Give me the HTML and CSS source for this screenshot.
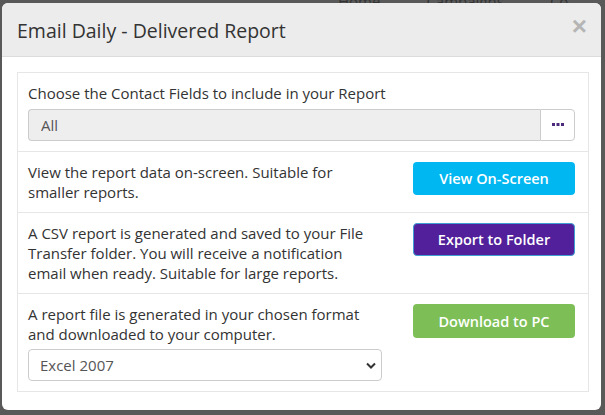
FILE: index.html
```html
<!DOCTYPE html>
<html lang="en">
<head>
  <meta charset="UTF-8">
  <meta name="viewport" content="width=device-width, initial-scale=1.0">
  <title>Email Daily - Delivered Report</title>
  <link rel="stylesheet" href="styles.css">
</head>
<body>
  <nav class="backdrop-nav">
    <span>Home</span>
    <span>Campaigns</span>
    <span>Co</span>
  </nav>
  <div class="modal">
    <header class="modal-header">
      <h4 class="modal-title">Email Daily - Delivered Report</h4>
      <button class="close" type="button">&times;</button>
    </header>
    <div class="modal-body">
      <div class="report-box">
        <div class="report-row">
          <label class="field-label" for="fields">Choose the Contact Fields to include in your Report</label>
          <div class="input-group">
            <input type="text" id="fields" class="form-control" value="All" readonly>
            <button class="btn-dots" type="button">
              <svg width="12" height="4" viewBox="0 0 12 4"><rect x="0" y="0" width="3" height="3" fill="#4b2a7e"/><rect x="4.5" y="0" width="3" height="3" fill="#4b2a7e"/><rect x="9" y="0" width="3" height="3" fill="#4b2a7e"/></svg>
            </button>
          </div>
        </div>
        <div class="report-row split">
          <p class="desc">View the report data on-screen. Suitable for smaller reports.</p>
          <button class="btn btn-info" type="button">View On-Screen</button>
        </div>
        <div class="report-row split">
          <p class="desc">A CSV report is generated and saved to your File Transfer folder. You will receive a notification email when ready. Suitable for large reports.</p>
          <button class="btn btn-purple" type="button">Export to Folder</button>
        </div>
        <div class="report-row split">
          <div>
            <p class="desc">A report file is generated in your chosen format and downloaded to your computer.</p>
            <div class="select-wrap">
              <select class="form-select">
                <option>Excel 2007</option>
                <option>CSV</option>
              </select>
              <svg class="chevron" width="10" height="7" viewBox="0 0 10 7"><path d="M1 1.5 L5 5.5 L9 1.5" fill="none" stroke="#333" stroke-width="2"/></svg>
            </div>
          </div>
          <button class="btn btn-success" type="button">Download to PC</button>
        </div>
      </div>
    </div>
  </div>
</body>
</html>
```

FILE: styles.css
```css
body {
  margin: 0;
  padding: 0;
  background-color: #595959;
  font-family: 'Open Sans', 'Liberation Sans', sans-serif;
  color: #333;
  overflow: hidden;
}
.backdrop-nav {
  position: absolute;
  top: -9px;
  left: 338px;
  display: flex;
  gap: 46px;
  font-size: 15px;
  color: #333;
}
.modal {
  position: relative;
  margin: 3px 4px 0 2px;
  background: #fff;
  border-radius: 6px;
  overflow: hidden;
  height: 407px;
}
.modal-header {
  display: flex;
  align-items: center;
  justify-content: space-between;
  background: #ececec;
  border-bottom: 1px solid #dcdcdc;
  height: 53px;
  padding: 0 14px 0 15px;
}
.modal-title {
  margin: 0;
  font-size: 19.5px;
  font-weight: 400;
  color: #333;
  padding-top: 2px;
}
.close {
  border: none;
  background: none;
  color: #b5b5b5;
  font-size: 26px;
  font-weight: 700;
  line-height: 1;
  padding: 0;
  margin-top: -8px;
  cursor: pointer;
}
.modal-body {
  padding: 15px 12px 15px 15px;
}
.report-box {
  border: 1px solid #e6e6e6;
}
.report-row {
  padding: 10px 13px 10px 10px;
  border-top: 1px solid #e6e6e6;
  font-size: 15px;
  line-height: 20px;
}
.report-row:first-child {
  border-top: none;
}
.report-row.split {
  display: grid;
  grid-template-columns: 354px 1fr;
  column-gap: 31px;
  align-items: start;
}
.field-label {
  display: block;
  margin-bottom: 6px;
}
.input-group {
  display: flex;
  height: 32px;
}
.form-control {
  flex: 1;
  margin: 0;
  border: 1px solid #ccc;
  border-right: none;
  border-radius: 4px 0 0 4px;
  background: #eee;
  color: #555;
  font-family: inherit;
  font-size: 15px;
  padding: 0 12px;
}
.btn-dots {
  width: 35px;
  border: 1px solid #ccc;
  border-radius: 0 4px 4px 0;
  background: #fff;
  display: flex;
  align-items: center;
  justify-content: center;
  padding: 0;
}
.desc {
  margin: 0;
}
.btn {
  height: 33px;
  border: 1px solid transparent;
  border-radius: 4px;
  color: #fff;
  font-family: inherit;
  font-size: 14.5px;
  font-weight: 600;
  cursor: pointer;
}
.btn-info {
  background: #00b7f1;
}
.btn-purple {
  background: #51209a;
  border-color: #3f9fd3;
}
.btn-success {
  background: #7dbf56;
  height: 34px;
}
.select-wrap {
  position: relative;
  margin-top: 5px;
}
.form-select {
  width: 100%;
  height: 32px;
  border: 1px solid #ccc;
  border-radius: 4px;
  background: #fff;
  color: #555;
  font-family: inherit;
  font-size: 15px;
  padding: 0 11px;
  appearance: none;
}
.chevron {
  position: absolute;
  right: 6px;
  top: 13px;
  pointer-events: none;
}
```
